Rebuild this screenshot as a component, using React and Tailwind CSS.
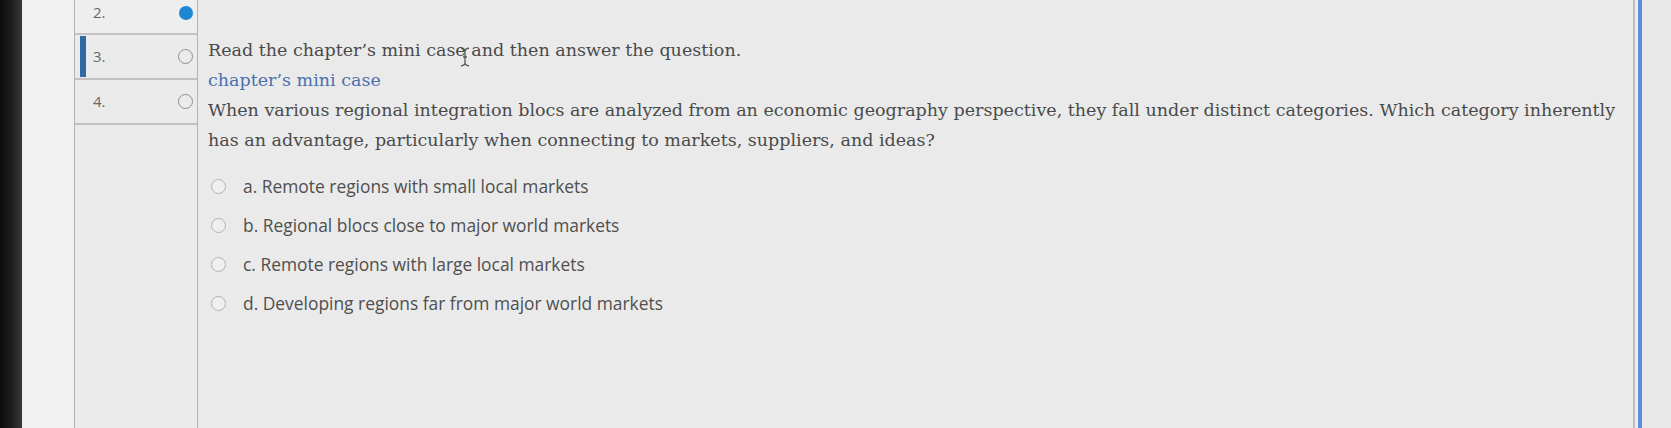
import React from "react";

const serif = { fontFamily: '"DejaVu Serif", "Liberation Serif", serif' };
const sans = { fontFamily: '"Open Sans", sans-serif' };

function Radio() {
  return <span className="block w-[15px] h-[15px] rounded-full border-[1.5px] border-[#b3b3b3] bg-[#efefef] shrink-0" />;
}

export default function App() {
  const options = [
    "a. Remote regions with small local markets",
    "b. Regional blocs close to major world markets",
    "c. Remote regions with large local markets",
    "d. Developing regions far from major world markets",
  ];
  return (
    <div className="w-[1671px] h-[428px] flex overflow-hidden bg-[#eaeaea] relative">
      <div className="w-[22px] h-full bg-gradient-to-r from-[#0c0c0c] via-[#1c1c1c] to-[#3a3a3a] shrink-0" />
      <div className="w-[52px] h-full bg-[#f1f1f1] shrink-0" />
      {/* sidebar */}
      <div className="w-[124px] h-full shrink-0 border-l border-r border-[#b4b4b4] bg-[#ebebeb] flex flex-col" style={sans}>
        <div className="h-[35px] shrink-0 border-b-2 border-[#c2c2c2] flex items-center justify-between pl-[18px] pr-[4px] pb-[8px] bg-[#eeeeee]">
          <span className="text-[15px] text-[#666]">2.</span>
          <span className="w-[14px] h-[14px] rounded-full bg-[#1f86d6]" />
        </div>
        <div className="h-[45px] shrink-0 border-b-2 border-[#c2c2c2] flex items-center justify-between pl-[18px] pr-[4px] relative">
          <span className="absolute left-[5px] top-[1px] bottom-[1px] w-[6px] bg-[#2f6aa6]" />
          <span className="text-[15px] text-[#666]">3.</span>
          <span className="w-[15px] h-[15px] rounded-full border-[1.5px] border-[#8f8f8f]" />
        </div>
        <div className="h-[45px] shrink-0 border-b-2 border-[#c2c2c2] flex items-center justify-between pl-[18px] pr-[4px]">
          <span className="text-[15px] text-[#666]">4.</span>
          <span className="w-[15px] h-[15px] rounded-full border-[1.5px] border-[#8f8f8f]" />
        </div>
        <div className="flex-1" />
      </div>
      {/* main */}
      <div className="w-[1435px] shrink-0 pl-[10px] pr-[8px] pt-[35px] relative">
        <div className="text-[17.5px] leading-[30px] text-[#4a4a4a]" style={serif}>
          <div>Read the chapter’s mini case and then answer the question.</div>
          <div className="text-[#4b70ad]">chapter’s mini case</div>
          <div>
            When various regional integration blocs are analyzed from an economic geography perspective, they fall under distinct categories. Which category inherently has an advantage, particularly when connecting to markets, suppliers, and ideas?
          </div>
        </div>
        <div className="mt-[12px] flex flex-col" style={sans}>
          {options.map((o) => (
            <div key={o} className="h-[39px] flex items-center gap-[17px] pl-[3px]">
              <Radio />
              <span className="text-[17.4px] text-[#4f4f4f]">{o}</span>
            </div>
          ))}
        </div>
        <svg className="absolute left-[262px] top-[47px]" width="10" height="20" viewBox="0 0 10 20">
          <path d="M1 1 Q5 2 5 4 V16 Q5 18 1 19 M9 1 Q5 2 5 4 M5 16 Q5 18 9 19 M3 10 H7" stroke="#555" strokeWidth="1.3" fill="none" />
        </svg>
      </div>
      <div className="w-[2px] h-full bg-[#bdbdbd] shrink-0" />
      <div className="w-[3px] h-full bg-[#ededed] shrink-0" />
      <div className="w-[4px] h-full bg-[#5a8fd9] shrink-0" />
      <div className="flex-1 h-full bg-[#e8e8e8]" />
    </div>
  );
}
